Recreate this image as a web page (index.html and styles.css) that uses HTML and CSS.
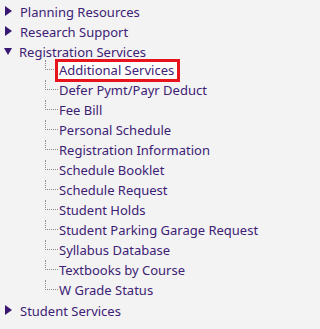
FILE: index.html
```html
<!DOCTYPE html>
<html>
<head>
<meta charset="utf-8">
<link rel="stylesheet" href="styles.css">
</head>
<body>
<ul class="tree">
  <li class="node"><div class="row"><span class="tri right"></span><span class="label">Planning Resources</span></div></li>
  <li class="node"><div class="row"><span class="tri right"></span><span class="label">Research Support</span></div></li>
  <li class="node open">
    <div class="row"><span class="tri down"></span><span class="label">Registration Services</span></div>
    <ul class="children">
      <li class="child"><span class="conn"></span><a class="link selected">Additional Services</a></li>
      <li class="child"><span class="conn"></span><a class="link">Defer Pymt/Payr Deduct</a></li>
      <li class="child"><span class="conn"></span><a class="link">Fee Bill</a></li>
      <li class="child"><span class="conn"></span><a class="link">Personal Schedule</a></li>
      <li class="child"><span class="conn"></span><a class="link">Registration Information</a></li>
      <li class="child"><span class="conn"></span><a class="link">Schedule Booklet</a></li>
      <li class="child"><span class="conn"></span><a class="link">Schedule Request</a></li>
      <li class="child"><span class="conn"></span><a class="link">Student Holds</a></li>
      <li class="child"><span class="conn"></span><a class="link">Student Parking Garage Request</a></li>
      <li class="child"><span class="conn"></span><a class="link">Syllabus Database</a></li>
      <li class="child"><span class="conn"></span><a class="link">Textbooks by Course</a></li>
      <li class="child"><span class="conn"></span><a class="link">W Grade Status</a></li>
    </ul>
  </li>
  <li class="node last"><div class="row"><span class="tri right"></span><span class="label">Student Services</span></div></li>
</ul>
</body>
</html>
```
FILE: styles.css
```css
html, body {
  margin: 0;
  padding: 0;
  background: #f3f3f3;
}
body {
  font-family: "Noto Sans", "Open Sans", sans-serif;
  font-size: 13px;
  color: #3d2175;
  padding-top: 2px;
}
ul {
  list-style: none;
  margin: 0;
  padding: 0;
}
.row {
  display: flex;
  align-items: center;
  height: 20px;
}
.tri {
  width: 0;
  height: 0;
  flex: none;
}
.tri.right {
  margin-left: 5px;
  margin-right: 8px;
  border-top: 5px solid transparent;
  border-bottom: 5px solid transparent;
  border-left: 7px solid #3a1673;
  margin-top: -2px;
}
.tri.down {
  margin-left: 4px;
  margin-right: 7px;
  border-left: 4.5px solid transparent;
  border-right: 4.5px solid transparent;
  border-top: 7px solid #3a1673;
  margin-top: -2px;
}
.label {
  white-space: nowrap;
}
.children {
  margin-top: -2px;
}
.child {
  display: flex;
  align-items: center;
  height: 20px;
  white-space: nowrap;
}
.conn {
  align-self: flex-start;
  margin-left: 45px;
  width: 12px;
  height: 9px;
  border-left: 1px dotted #8a8a8a;
  border-bottom: 1px dotted #8a8a8a;
  flex: none;
}
.link {
  display: inline-block;
  padding-left: 1px;
  line-height: 17px;
  height: 17px;
}
.link.selected {
  background: #ffffff;
  outline: 3px solid #e8141d;
  padding-right: 3px;
}
.last {
  margin-top: 1px;
}
```
